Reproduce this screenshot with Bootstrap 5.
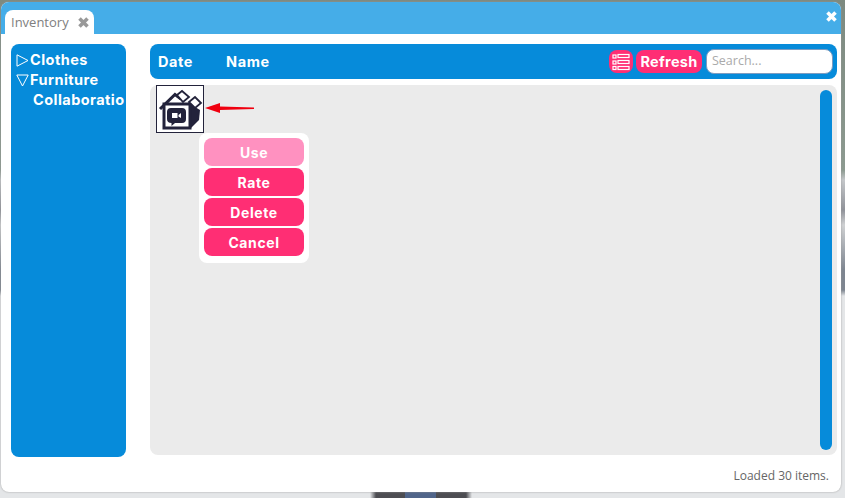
<!DOCTYPE html>
<html lang="en">
<head>
    <meta charset="UTF-8">
    <meta name="viewport" content="width=device-width, initial-scale=1.0">
    <title>Inventory</title>
    <link href="https://cdn.jsdelivr.net/npm/bootstrap@5.3.0/dist/css/bootstrap.min.css" rel="stylesheet">
    <style>
        html, body { height: 100%; }
        body {
            background-color: #e4e6e8;
            background-image:
                linear-gradient(90deg, transparent 370px, #4d4d52 376px, #4d4d52 405px, #50658a 405px, #50658a 436px, #4d4d52 436px, #4d4d52 466px, transparent 472px),
                linear-gradient(180deg, #7d8a80 0, #8c9a90 170px, #c4c7ca 180px, #8f9299 210px, #cfd1d3 225px, #7d8590 270px, #7d8590 290px, #e4e6e8 296px);
            background-size: 100% 8px, 100% 100%;
            background-position: 0 bottom, 0 0;
            background-repeat: no-repeat;
            font-family: "Inter", "Liberation Sans", sans-serif;
            overflow: hidden;
        }
        .inv-window {
            margin: 2px 0 0 1px;
            width: 840px;
            height: 490px;
            background: #fff;
            border-radius: 8px;
            box-shadow: 0 0 2px #9a9a9a;
            overflow: hidden;
        }
        .inv-titlebar {
            height: 32px;
            background: #45ade8;
            padding: 8px 3px 0 4px;
        }
        .inv-tab {
            width: 89px;
            height: 24px;
            background: #fff;
            border-radius: 8px 8px 0 0;
            color: #808080;
            font-family: "Open Sans", sans-serif;
            font-size: 13px;
            padding: 1px 4px 0 6px;
        }
        .inv-x { width: 13px; height: 13px; }
        .inv-body { padding: 10px 4px 0 10px; gap: 24px; height: 423px; }
        .inv-side {
            width: 115px;
            background: #068bda;
            border-radius: 8px;
            color: #fff;
            font-weight: 700;
            font-size: 14.5px;
            letter-spacing: .45px;
            padding: 6px 4px 0 5px;
            white-space: nowrap;
        }
        .inv-node { height: 20px; gap: 1px; }
        .inv-leaf { padding-left: 17px; }
        .inv-main { width: 687px; gap: 6px; }
        .inv-toolbar {
            height: 35px;
            background: #068bda;
            border-radius: 8px;
            color: #fff;
            font-weight: 700;
            font-size: 14.5px;
            letter-spacing: .6px;
            padding: 0 4px 0 8px;
        }
        .inv-date { width: 68px; }
        .inv-pink {
            background: #ff2e74;
            color: #fff;
            border-radius: 8px;
        }
        .inv-listbtn { width: 24px; height: 23px; }
        .inv-refresh { width: 66px; height: 23px; letter-spacing: .3px; margin: 0 4px 0 3px; }
        .inv-search {
            width: 127px;
            height: 25px;
            border: 1px solid #7d9cc0;
            border-radius: 8px;
            background: #fff;
            color: #aaa;
            font-family: "Open Sans", sans-serif;
            font-weight: 400;
            font-size: 12.5px;
            letter-spacing: 0;
            padding: 0 5px;
        }
        .inv-grid {
            position: relative;
            height: 370px;
            background: #ebebeb;
            border-radius: 8px;
            padding: 0 0 0 6px;
        }
        .inv-item {
            width: 48px;
            height: 48px;
            background: #fff;
            border: 1px solid #23233b;
        }
        .inv-arrow { margin: 17px 0 0 1px; }
        .inv-scroll {
            position: absolute;
            right: 5px;
            top: 5px;
            bottom: 5px;
            width: 12px;
            background: #068bda;
            border-radius: 6px;
        }
        .inv-menu {
            position: absolute;
            left: 49px;
            top: 48px;
            width: 110px;
            padding: 5px 5px 7px;
            gap: 2px;
            background: #fff;
            border-radius: 8px;
        }
        .inv-menu .inv-pink {
            height: 28px;
            padding-top: 1px;
            font-weight: 700;
            font-size: 14px;
            letter-spacing: .6px;
        }
        .inv-menu .inv-off { background: #ff91c0; }
        .inv-foot {
            color: #666;
            font-family: "Open Sans", sans-serif;
            font-size: 12px;
            padding: 10px 12px 0 0;
        }
    </style>
</head>
<body>
    <div class="inv-window">
        <div class="inv-titlebar d-flex justify-content-between">
            <div class="inv-tab d-flex align-items-center justify-content-between">
                <span>Inventory</span>
                <svg class="inv-x" viewBox="0 0 13 13"><path d="M2.500 2.500L10.500 10.500M10.500 2.500L2.500 10.500" stroke="#999" stroke-width="3.6"/></svg>
            </div>
            <svg class="inv-x" viewBox="0 0 13 13"><path d="M2.500 2.500L10.500 10.500M10.500 2.500L2.500 10.500" stroke="#fff" stroke-width="3.6"/></svg>
        </div>
        <div class="inv-body d-flex">
            <div class="inv-side">
                <div class="inv-node d-flex align-items-center">
                    <svg width="13" height="13" viewBox="0 0 13 13"><path d="M1 .8L12 6.500L1 12.200Z" fill="none" stroke="#fff"/></svg>
                    <span>Clothes</span>
                </div>
                <div class="inv-node d-flex align-items-center">
                    <svg width="13" height="13" viewBox="0 0 13 13"><path d="M.8 1H12.200L6.500 12Z" fill="none" stroke="#fff"/></svg>
                    <span>Furniture</span>
                </div>
                <div class="inv-node inv-leaf d-flex align-items-center">Collaboratio</div>
            </div>
            <div class="inv-main d-flex flex-column">
                <div class="inv-toolbar d-flex align-items-center">
                    <span class="inv-date">Date</span>
                    <span>Name</span>
                    <div class="inv-pink inv-listbtn d-flex align-items-center justify-content-center ms-auto">
                        <svg width="20" height="18" viewBox="0 0 20 18" fill="none" stroke="#fff" stroke-width="1.2"><rect x="2" y="2" width="3" height="3"/><rect x="2" y="8" width="3" height="3"/><rect x="2" y="13.500" width="3" height="3"/><rect x="7" y="1.500" width="11" height="3"/><rect x="7" y="7.500" width="11" height="3"/><rect x="7" y="13.500" width="11" height="3"/></svg>
                    </div>
                    <div class="inv-pink inv-refresh d-flex align-items-center justify-content-center">Refresh</div>
                    <div class="inv-search d-flex align-items-center">Search...</div>
                </div>
                <div class="inv-grid d-flex align-items-start">
                    <div class="inv-item d-flex align-items-center justify-content-center">
                        <svg width="46" height="46" viewBox="0 0 46 46">
                            <path d="M3 23L18 8.500L24 13" fill="none" stroke="#23233b" stroke-width="3"/>
                            <path d="M33 18L43 24L42 34L33 43Z" fill="#23233b"/>
                            <path d="M7 18H33V42H7Z" fill="#fff" stroke="#23233b" stroke-width="3"/>
                            <path d="M20 9L25 5L32 11L26 16Z M32 16L38 11L44 17L38 22Z" fill="#fff" stroke="#23233b" stroke-width="1.8"/>
                            <path d="M14 22H25Q29 22 29 26V33Q29 37 25 37H18L14.500 40V37Q10 37 10 33V26Q10 22 14 22Z" fill="#23233b"/>
                            <path d="M15 27H20.500V32H15ZM21.500 29L24 27V32L21.500 30.500Z" fill="#fff"/>
                        </svg>
                    </div>
                    <svg class="inv-arrow" width="50" height="12" viewBox="0 0 50 12"><path d="M0 6L15 1V4.500L49 5.500V7L15 8V11Z" fill="#f0000f"/></svg>
                    <div class="inv-scroll"></div>
                    <div class="inv-menu d-flex flex-column">
                        <div class="inv-pink inv-off d-flex align-items-center justify-content-center">Use</div>
                        <div class="inv-pink d-flex align-items-center justify-content-center">Rate</div>
                        <div class="inv-pink d-flex align-items-center justify-content-center">Delete</div>
                        <div class="inv-pink d-flex align-items-center justify-content-center">Cancel</div>
                    </div>
                </div>
            </div>
        </div>
        <div class="inv-foot text-end">Loaded 30 items.</div>
    </div>
</body>
</html>
